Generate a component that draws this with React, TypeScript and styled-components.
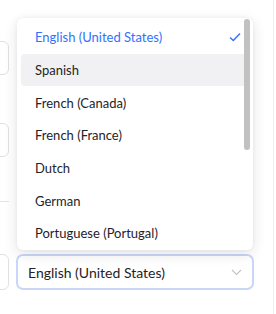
import styled, { createGlobalStyle } from "styled-components"

const GlobalStyle = createGlobalStyle`
  body {
    margin: 0;
    background: #ffffff;
    font-family: Lato, "Noto Sans", sans-serif;
  }
`

const Page = styled.div`
  position: relative;
  display: flex;
  width: 276px;
  height: 314px;
  overflow: hidden;
  background: #ffffff;
`

const SideColumn = styled.div`
  width: 9px;
  flex-shrink: 0;
  overflow: hidden;
  display: flex;
  flex-direction: column;
  align-items: flex-end;
  padding-top: 41px;
`

const SideField = styled.div<{ gap: number; tall?: boolean }>`
  width: 120px;
  height: ${({ tall }) => (tall ? 36 : 34)}px;
  flex-shrink: 0;
  border: 1px solid #dee0e3;
  border-radius: 6px;
  margin-bottom: ${({ gap }) => gap}px;
  box-sizing: border-box;
`

const SideDivider = styled.div`
  width: 140px;
  height: 1px;
  flex-shrink: 0;
  background: #e4e5eb;
  margin-bottom: 52px;
`

const MainColumn = styled.div`
  width: 238px;
  margin-left: 7px;
  padding-top: 254px;
  flex-shrink: 0;
`

const SelectBox = styled.div`
  height: 36px;
  box-sizing: border-box;
  border: 2px solid #c9d6f7;
  border-radius: 7px;
  display: flex;
  align-items: center;
  justify-content: space-between;
  padding: 0 10px 0 10px;
  font-size: 14px;
  color: #1f2329;
`

const RightEdge = styled.div`
  margin-left: auto;
  width: 1px;
  margin-right: 2px;
  background: #eeeff1;
`

const Menu = styled.div`
  position: absolute;
  left: 17px;
  top: 18px;
  width: 236px;
  height: 232px;
  box-sizing: border-box;
  background: #ffffff;
  border-radius: 6px;
  box-shadow: 0 4px 14px rgba(31, 35, 41, 0.12), 0 0 4px rgba(31, 35, 41, 0.05);
  padding: 3px 4px;
  overflow: hidden;
`

const Item = styled.div<{ selected?: boolean; hovered?: boolean }>`
  height: 32.67px;
  flex-shrink: 0;
  display: flex;
  align-items: center;
  justify-content: space-between;
  padding: 0 8px 0 14px;
  border-radius: 4px;
  font-size: 13px;
  color: ${({ selected }) => (selected ? "#3370ff" : "#1f2329")};
  background: ${({ hovered }) => (hovered ? "#f1f1f3" : "transparent")};
`

const Thumb = styled.div`
  position: absolute;
  right: 3px;
  top: 1px;
  width: 6px;
  height: 131px;
  border-radius: 3px;
  background: #c1c1c1;
`

const languages = [
  "English (United States)",
  "Spanish",
  "French (Canada)",
  "French (France)",
  "Dutch",
  "German",
  "Portuguese (Portugal)",
]

const Check = () => (
  <svg width="12" height="10" viewBox="0 0 12 10">
    <path d="M1 5.5 L4.3 8.6 L11 1.4" fill="none" stroke="#3370ff" strokeWidth="1.4" />
  </svg>
)

const Chevron = () => (
  <svg width="11" height="7" viewBox="0 0 11 7">
    <path d="M1 1 L5.5 5.5 L10 1" fill="none" stroke="#c2c4c8" strokeWidth="1.2" />
  </svg>
)

export default function App() {
  return (
    <Page>
      <GlobalStyle />
      <SideColumn>
        <SideField gap={48} />
        <SideField gap={44} />
        <SideDivider />
        <SideField gap={0} tall />
      </SideColumn>
      <MainColumn>
        <SelectBox>
          <span>English (United States)</span>
          <Chevron />
        </SelectBox>
      </MainColumn>
      <RightEdge />
      <Menu>
        {languages.map((lang, i) => (
          <Item key={lang} selected={i === 0} hovered={i === 1}>
            <span>{lang}</span>
            {i === 0 && <Check />}
          </Item>
        ))}
        <Thumb />
      </Menu>
    </Page>
  )
}
